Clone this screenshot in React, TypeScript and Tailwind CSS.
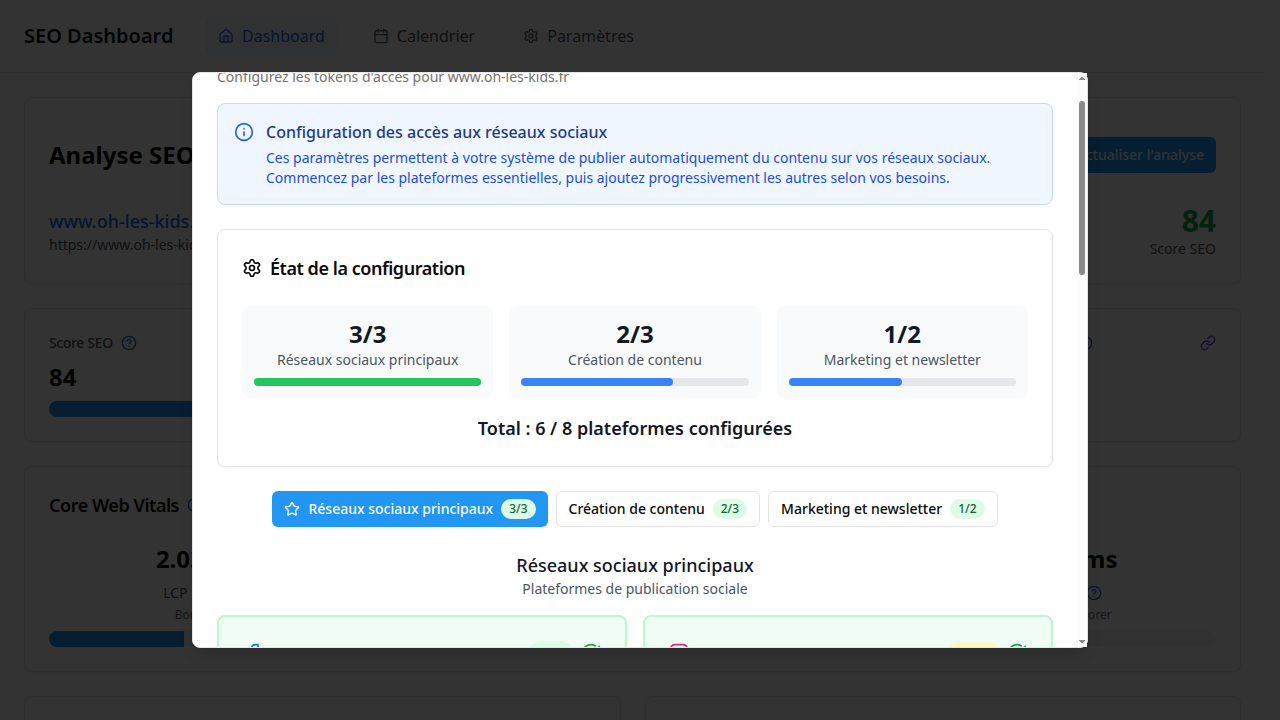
import type { ReactNode } from "react";
import {
  Calendar,
  CircleCheckBig,
  CircleQuestionMark,
  Facebook,
  House,
  Info,
  Instagram,
  Link,
  Settings,
  Star,
} from "lucide-react";

function Card({ className = "", children }: { className?: string; children?: ReactNode }) {
  return (
    <div className={`rounded-lg border border-[#e5e5e5] bg-white p-6 shadow-xs ${className}`}>{children}</div>
  );
}

function Help() {
  return <CircleQuestionMark className="size-4 shrink-0 text-[#2563eb]" />;
}

const vitals = [
  { value: "2.03s", name: "LCP", verdict: "Bon", fill: 135 },
  { value: "0.12s", name: "FCP", verdict: "Bon", fill: 60 },
  { value: "0.01", name: "CLS", verdict: "Bon", fill: 20 },
  { value: "245ms", name: "INP", verdict: "À améliorer", fill: 0 },
];

function DashboardPage() {
  return (
    <div className="w-[1265px]">
      <header className="flex h-[73px] items-center gap-[32.6px] border-b border-[#e5e5e5] px-6">
        <span className="text-xl font-semibold text-[#111827]">SEO Dashboard</span>
        <nav className="flex items-center gap-6 text-[#4b5563]">
          <a className="flex items-center gap-2 rounded-md bg-[#eff6ff] px-3 py-2 text-[#2563eb]">
            <House className="size-4" />
            Dashboard
          </a>
          <a className="flex items-center gap-2 px-3 py-2">
            <Calendar className="size-4" />
            Calendrier
          </a>
          <a className="flex items-center gap-2 px-3 py-2">
            <Settings className="size-4" />
            Paramètres
          </a>
        </nav>
      </header>
      <main className="flex flex-col gap-6 p-6">
        <Card className="flex h-[187px] flex-col justify-between">
          <div className="flex h-[66px] items-center justify-between">
            <h1 className="text-2xl font-bold">Analyse SEO</h1>
            <button className="h-9 rounded-md bg-[#2196f3] px-3 text-sm font-medium text-[#f8fafc]">
              Actualiser l'analyse
            </button>
          </div>
          <div className="flex items-center justify-between">
            <div>
              <div className="text-lg font-medium text-[#2563eb]">www.oh-les-kids.fr</div>
              <div className="text-sm text-[#4b5563]">https://www.oh-les-kids.fr</div>
            </div>
            <div className="text-right">
              <div className="text-3xl font-bold text-[#16a34a]">84</div>
              <div className="text-sm text-[#4b5563]">Score SEO</div>
            </div>
          </div>
        </Card>
        <div className="grid h-[134px] grid-cols-4 gap-6">
          <Card>
            <div className="flex items-center gap-2 text-sm font-medium tracking-tight text-[#4b5563]">
              Score SEO <Help />
            </div>
            <div className="mt-2 text-2xl font-bold">84</div>
            <div className="mt-2 h-4 rounded-full bg-[#2196f3]" />
          </Card>
          <Card />
          <Card />
          <Card>
            <div className="flex items-center gap-2 text-sm font-medium tracking-tight text-[#4b5563]">
              <span className="w-[89px] whitespace-nowrap">Liens internes</span>
              <Help />
              <Link className="ml-auto size-4 text-[#9333ea]" />
            </div>
          </Card>
        </div>
        <Card className="h-[206px]">
          <h2 className="flex items-center gap-2 text-lg font-semibold tracking-tight">
            Core Web Vitals <Help />
          </h2>
          <div className="mt-6 grid grid-cols-4 gap-6">
            {vitals.map((v) => (
              <div key={v.name} className="text-center">
                <div className="text-2xl font-bold">{v.value}</div>
                <div className="mt-2 flex items-center justify-center gap-[5px] text-sm text-[#4b5563]">
                  {v.name} <Help />
                </div>
                <div className="mt-1 text-xs text-[#6b7280]">{v.verdict}</div>
                <div className="mt-2 h-4 overflow-hidden rounded-full bg-[#f5f5f4]">
                  <div className="h-full bg-[#2196f3]" style={{ width: v.fill }} />
                </div>
              </div>
            ))}
          </div>
        </Card>
        <div className="grid grid-cols-2 gap-6">
          <Card className="h-48" />
          <Card className="h-48" />
        </div>
      </main>
    </div>
  );
}

const groups = [
  { label: "Réseaux sociaux principaux", count: "3/3", ratio: "100%", bar: "bg-[#22c55e]" },
  { label: "Création de contenu", count: "2/3", ratio: "66.67%", bar: "bg-[#3b82f6]" },
  { label: "Marketing et newsletter", count: "1/2", ratio: "50%", bar: "bg-[#3b82f6]" },
];

function PlatformCard({ icon, badge }: { icon: ReactNode; badge: ReactNode }) {
  return (
    <div className="h-60 rounded-lg border-2 border-[#bbf7d0] bg-[#f0fdf4] p-6">
      <div className="flex h-6 items-center justify-between">
        {icon}
        <div className="flex items-center gap-2">
          {badge}
          <CircleCheckBig className="size-5 text-[#16a34a]" />
        </div>
      </div>
    </div>
  );
}

function SettingsDialog() {
  return (
    <div className="flex h-[576px] w-[896px] rounded-lg border border-[#e5e5e5] bg-white shadow-lg">
      <div className="flex-1 overflow-hidden rounded-l-[7px] px-6">
        <p className="-mt-1.5 text-sm text-[#78716c]">Configurez les tokens d'accès pour www.oh-les-kids.fr</p>
        <div className="mt-4 flex items-start gap-3 rounded-lg border border-[#bfdbfe] bg-[#eff6ff] p-4">
          <Info className="mt-0.5 size-5 text-[#2563eb]" />
          <div>
            <h3 className="font-medium text-[#1e3a8a]">Configuration des accès aux réseaux sociaux</h3>
            <p className="mt-1 text-sm text-[#1d4ed8]">
              Ces paramètres permettent à votre système de publier automatiquement du contenu sur vos réseaux sociaux.
              <br />
              Commencez par les plateformes essentielles, puis ajoutez progressivement les autres selon vos besoins.
            </p>
          </div>
        </div>

        <Card className="mt-6">
          <h3 className="flex items-center gap-2 text-lg font-semibold tracking-tight">
            <Settings className="size-5" />
            État de la configuration
          </h3>
          <div className="mt-6 grid grid-cols-3 gap-4">
            {groups.map((g) => (
              <div key={g.label} className="rounded-lg bg-[#f9fafb] p-3 text-center">
                <div className="text-2xl font-bold text-[#111827]">{g.count}</div>
                <div className="text-sm text-[#4b5563]">{g.label}</div>
                <div className="mt-2 h-2 rounded-full bg-[#e5e7eb]">
                  <div className={`h-2 rounded-full ${g.bar}`} style={{ width: g.ratio }} />
                </div>
              </div>
            ))}
          </div>
          <div className="mt-4 text-center text-lg font-semibold text-[#111827]">
            Total : 6 / 8 plateformes configurées
          </div>
        </Card>

        <div className="mt-6 flex justify-center gap-2">
          {groups.map((g, i) => (
            <button
              key={g.label}
              className={`flex h-9 items-center gap-2 rounded-md px-3 text-sm font-medium whitespace-nowrap ${
                i === 0 ? "bg-[#2196f3] text-[#fafaf9]" : "border border-[#e5e5e5] bg-white"
              }`}
            >
              {i === 0 && <Star className="size-4" />}
              {g.label}
              <span className="rounded-full bg-[#dcfce7] px-2 py-0.5 text-xs text-[#166534]">{g.count}</span>
            </button>
          ))}
        </div>

        <div className="mt-6 text-center">
          <h3 className="text-lg font-medium text-[#111827]">Réseaux sociaux principaux</h3>
          <p className="text-sm text-[#4b5563]">Plateformes de publication sociale</p>
        </div>

        <div className="mt-4 grid grid-cols-2 gap-4">
          <PlatformCard
            icon={<Facebook className="size-5 text-[#2563eb]" />}
            badge={<span className="h-6 w-11 rounded-full bg-[#dcfce7]" />}
          />
          <PlatformCard
            icon={<Instagram className="size-5 text-[#db2777]" />}
            badge={<span className="h-6 w-[52px] rounded-full bg-[#fef9c3]" />}
          />
        </div>
      </div>

      <div className="flex w-2.5 flex-col items-center bg-[#fcfcfc]">
        <svg className="mt-1 h-[3px] w-1.5" viewBox="0 0 6 3">
          <path d="M0 3V2h1V1h1V0h2v1h1v1h1v1z" fill="#8b8b8b" />
        </svg>
        <div className="mt-[21px] h-[174px] w-1.5 rounded-full bg-[#8b8b8b]" />
        <svg className="mt-auto mb-1 h-[3px] w-1.5" viewBox="0 0 6 3">
          <path d="M0 0v1h1v1h1v1h2V2h1V1h1V0z" fill="#8b8b8b" />
        </svg>
      </div>
    </div>
  );
}

export default function App() {
  return (
    <div className="relative h-[720px] w-[1280px] overflow-hidden bg-white font-['Noto_Sans',sans-serif] text-[#0c0a09]">
      <DashboardPage />
      <div className="absolute inset-0 flex items-center justify-center bg-black/80">
        <SettingsDialog />
      </div>
    </div>
  );
}
